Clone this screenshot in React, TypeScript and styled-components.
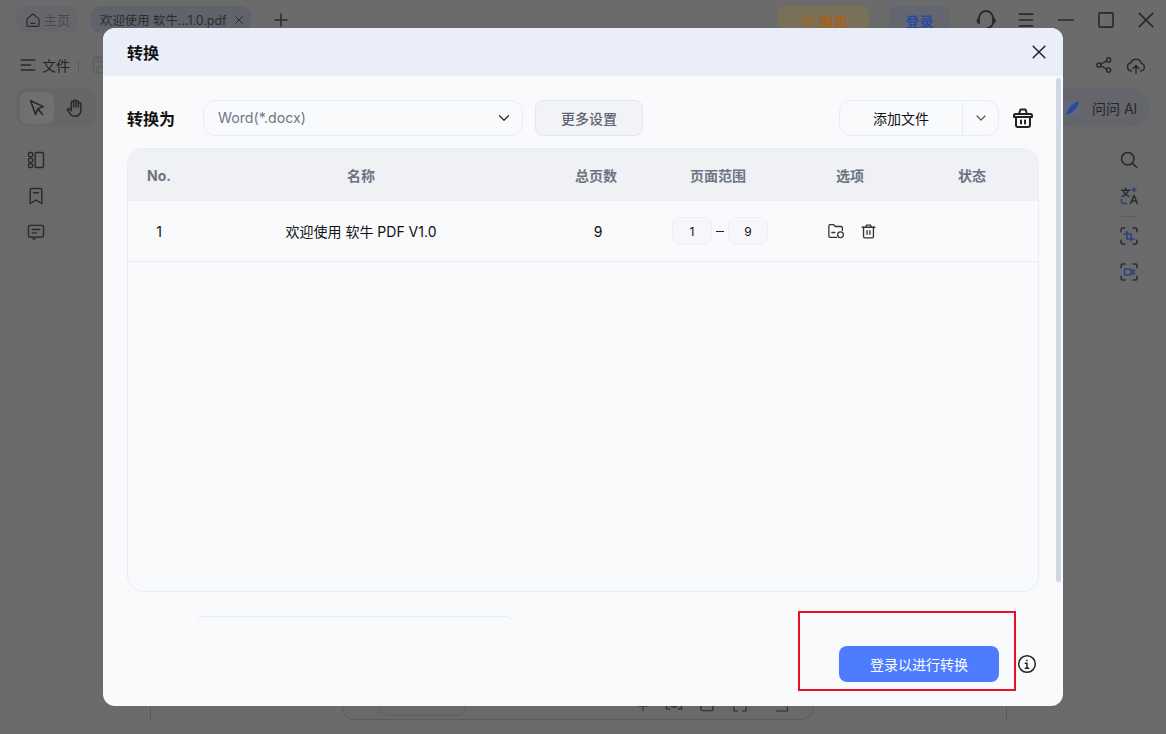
import React from "react";
import styled, { createGlobalStyle } from "styled-components";

const FONT = `Inter, "Noto Sans CJK SC", "Liberation Sans", sans-serif`;

const GlobalStyle = createGlobalStyle`
  html, body {
    margin: 0;
    padding: 0;
    height: 100%;
    overflow: hidden;
    font-family: ${FONT};
  }
  * {
    box-sizing: border-box;
  }
`;

const Page = styled.div`
  position: relative;
  width: 1166px;
  height: 734px;
  overflow: hidden;
  background: #6b6b6b;
  display: flex;
  flex-direction: column;
`;

/* ---- app behind the dialog (already dimmed colours) ---- */

const TitleBar = styled.div`
  height: 39px;
  padding: 6px 0 0 16px;
  display: flex;
  align-items: flex-start;
`;

const Tab = styled.div<{ $width: number; $tint: string; $mr: number; $size: number; $gap: number; $pl: number }>`
  width: ${(p) => p.$width}px;
  height: 27px;
  margin-right: ${(p) => p.$mr}px;
  border-radius: 9px;
  background: ${(p) => p.$tint};
  display: flex;
  align-items: center;
  padding-left: ${(p) => p.$pl}px;
  gap: ${(p) => p.$gap}px;
  font-size: ${(p) => p.$size}px;
  color: #2c2c2e;
  white-space: nowrap;
`;

const HomeText = styled.span`
  color: #4a4a4e;
`;

const PlusBox = styled.div`
  width: 20px;
  height: 27px;
  display: flex;
  align-items: center;
  justify-content: center;
`;

const Spacer = styled.div`
  flex: 1;
`;

const TopButton = styled.div<{ $width: number; $bg: string; $color: string; $mr: number }>`
  width: ${(p) => p.$width}px;
  height: 30px;
  margin-right: ${(p) => p.$mr}px;
  border-radius: 8px;
  background: ${(p) => p.$bg};
  color: ${(p) => p.$color};
  font-size: 14px;
  font-weight: 700;
  display: flex;
  align-items: center;
  justify-content: center;
  gap: 4px;
`;

const WindowIcons = styled.div`
  display: flex;
  align-items: center;
  height: 28px;
  padding-right: 8px;
  gap: 16px;
`;

const IconSlot = styled.div`
  width: 24px;
  height: 24px;
  display: flex;
  align-items: center;
  justify-content: center;
`;

const MenuRow = styled.div`
  height: 40px;
  padding: 16px 19px 0 18px;
  display: flex;
  align-items: flex-start;
  font-size: 14px;
  color: #232325;
`;

const MenuLabel = styled.span`
  margin: 1px 0 0 4px;
  line-height: 20px;
`;

const MenuDivider = styled.div`
  width: 1px;
  height: 12px;
  background: #5c5c5e;
  margin: 5px 12px 0 8px;
`;

const RightIcons = styled.div`
  display: flex;
  margin-left: auto;
  margin-top: -1px;
  gap: 10px;
`;

const ToolRow = styled.div`
  height: 52px;
  padding: 9px 16px 0;
  display: flex;
  align-items: flex-start;
  justify-content: space-between;
`;

const ToolGroup = styled.div`
  width: 80px;
  height: 39px;
  padding: 4px;
  border-radius: 12px;
  background: #656668;
  display: flex;
  gap: 4px;
`;

const ToolButton = styled.div<{ $active?: boolean }>`
  width: 34px;
  height: 32px;
  flex: none;
  border-radius: 8px;
  background: ${(p) => (p.$active ? "#6f7072" : "transparent")};
  display: flex;
  align-items: center;
  justify-content: center;
`;

const AskPill = styled.div`
  width: 100px;
  height: 39px;
  border-radius: 20px;
  background: #65666c;
  display: flex;
  align-items: center;
  padding-left: 12px;
  gap: 10px;
  font-size: 14px;
  color: #26262a;
`;

const SideRow = styled.div`
  flex: 1;
  padding: 9px 18px 0 16px;
  display: flex;
  justify-content: space-between;
  align-items: flex-start;
`;

const SidePanel = styled.div<{ $height: number }>`
  width: 39px;
  height: ${(p) => p.$height}px;
  border-radius: 12px;
  background: #696a6b;
  display: flex;
  flex-direction: column;
  align-items: center;
  padding-top: 10px;
  gap: 16px;
`;

const SideDivider = styled.div`
  width: 16px;
  height: 1px;
  background: #5d5d5f;
  margin: -6px 0 -7px;
`;

const BottomEdge = styled.div`
  position: absolute;
  left: 150px;
  bottom: 14px;
  width: 857px;
  height: 40px;
  border-left: 1px solid #5b5b5d;
  border-right: 1px solid #5b5b5d;
`;

const BottomToolbar = styled.div`
  position: absolute;
  left: 342px;
  bottom: 14px;
  width: 472px;
  height: 40px;
  border: 1px solid #5b5b5d;
  border-radius: 12px;
  background: #68696b;
  padding: 0 0 3px 37px;
  display: flex;
  align-items: flex-end;
`;

const PageBox = styled.div`
  width: 86px;
  height: 32px;
  border: 1px solid #5f5f61;
  border-radius: 9px;
`;

const BarIcon = styled.div<{ $ml: number }>`
  margin: 0 0 3px ${(p) => p.$ml}px;
  display: flex;
`;

/* ---- dialog ---- */

const Dialog = styled.div`
  position: absolute;
  left: 103px;
  top: 28px;
  width: 960px;
  height: 678px;
  border-radius: 12px;
  overflow: hidden;
  background: #f9fafc;
  display: flex;
  flex-direction: column;
`;

const DialogHeader = styled.div`
  height: 48px;
  flex: none;
  background: #e9eef9;
  padding: 0 12px 0 24px;
  display: flex;
  align-items: center;
  justify-content: space-between;
`;

const DialogTitle = styled.div`
  font-size: 16px;
  font-weight: 700;
  color: #111;
  margin-top: -1px;
`;

const CloseButton = styled.button`
  width: 24px;
  height: 24px;
  padding: 0;
  border: none;
  background: none;
  display: flex;
  align-items: center;
  justify-content: center;
`;

const DialogBody = styled.div`
  flex: 1;
  padding: 24px 24px 0;
  display: flex;
  flex-direction: column;
`;

const Scrollbar = styled.div`
  position: absolute;
  right: 2px;
  top: 50px;
  width: 5px;
  height: 504px;
  border-radius: 3px;
  background: #cfd6e4;
`;

const Controls = styled.div`
  height: 36px;
  display: flex;
  align-items: center;
`;

const ControlLabel = styled.div`
  width: 76px;
  font-size: 16px;
  font-weight: 700;
  color: #111;
`;

const Select = styled.div`
  width: 320px;
  height: 36px;
  border: 1px solid #e9ecf5;
  border-radius: 12px;
  padding: 0 9px 1px 14px;
  display: flex;
  align-items: center;
  justify-content: space-between;
  font-size: 14.2px;
  color: #6f7889;
`;

const MoreButton = styled.button`
  width: 108px;
  height: 36px;
  margin-left: 12px;
  border: 1px solid #e3e6ee;
  border-radius: 8px;
  background: #f2f3f7;
  font-family: ${FONT};
  font-size: 14px;
  font-weight: 500;
  color: #5f6673;
`;

const SplitButton = styled.div`
  width: 160px;
  height: 36px;
  margin-left: auto;
  border: 1px solid #e9ecf5;
  border-radius: 12px;
  display: flex;
  align-items: center;
  font-size: 14px;
  color: #111;
`;

const SplitLabel = styled.div`
  width: 123px;
  height: 100%;
  border-right: 1px solid #e9ecf5;
  display: flex;
  align-items: center;
  justify-content: center;
`;

const SplitCaret = styled.div`
  flex: 1;
  display: flex;
  align-items: center;
  justify-content: center;
`;

const TrashSlot = styled.div`
  width: 40px;
  display: flex;
  justify-content: flex-end;
  padding-right: 4px;
`;

const TableBox = styled.div`
  height: 444px;
  margin-top: 12px;
  border: 1px solid #e9ecf5;
  border-radius: 16px;
  overflow: hidden;
`;

const COLUMNS = "62px 342px 128px 116px 148px 96px";

const HeadRow = styled.div`
  height: 52px;
  background: #f0f1f5;
  display: grid;
  grid-template-columns: ${COLUMNS};
  align-items: center;
  text-align: center;
  font-size: 14px;
  font-weight: 700;
  color: #6c7482;
`;

const BodyRow = styled.div`
  height: 61px;
  border-bottom: 1px solid #ebedf1;
  display: grid;
  grid-template-columns: ${COLUMNS};
  align-items: center;
  text-align: center;
  font-size: 14px;
  color: #111;
`;

const PageCount = styled.span`
  padding-left: 4px;
`;

const RangeCell = styled.div`
  display: flex;
  align-items: center;
  justify-content: center;
  padding-left: 4px;
  gap: 4px;
`;

const RangeInput = styled.div`
  width: 40px;
  height: 28px;
  border: 1px solid #eef0f5;
  border-radius: 8px;
  background: #f5f7fb;
  font-size: 12px;
  display: flex;
  align-items: center;
  justify-content: center;
`;

const RangeDash = styled.div`
  width: 8px;
  height: 1px;
  background: #222;
`;

const OptionCell = styled.div`
  display: flex;
  align-items: center;
  justify-content: center;
  padding-left: 3px;
  gap: 15px;
`;

const Footer = styled.div`
  flex: 1;
  display: flex;
  padding: 0 2px 0 69px;
`;

const OutputBox = styled.div`
  width: 317px;
  height: 7px;
  margin-top: 24px;
  border: 1px solid #e9ecf5;
  border-bottom: none;
  border-radius: 10px 10px 0 0;
  -webkit-mask-image: linear-gradient(#000 30%, transparent);
  mask-image: linear-gradient(#000 30%, transparent);
`;

const FooterAction = styled.div`
  margin: 54px 0 0 auto;
  height: 36px;
  display: flex;
  align-items: center;
  gap: 18px;
`;

const ConvertButton = styled.button`
  width: 160px;
  height: 36px;
  border: none;
  border-radius: 8px;
  background: #4d7cfe;
  color: #fff;
  font-family: ${FONT};
  font-size: 14px;
`;

const Callout = styled.div`
  position: absolute;
  left: 798px;
  top: 611px;
  width: 218px;
  height: 80px;
  border: 2px solid #e81123;
  pointer-events: none;
`;

/* ---- icons ---- */

const Line = ({ size = 20, color = "#2a2a2c", width = 1.6, children }: { size?: number; color?: string; width?: number; children: React.ReactNode }) => (
  <svg width={size} height={size} viewBox="0 0 24 24" fill="none" stroke={color} strokeWidth={width} strokeLinecap="round" strokeLinejoin="round">
    {children}
  </svg>
);

const DARK = "#2a2a2c";
const NAVY = "#2b3f7e";

export default function App(): React.ReactElement {
  return (
    <Page>
      <GlobalStyle />
      <TitleBar>
        <Tab $width={62} $tint="#66676b" $mr={13} $size={13} $gap={2} $pl={8}>
          <Line size={18} color={DARK}>
            <path d="M4 10.5 12 4l8 6.5V19a1.5 1.5 0 0 1-1.5 1.5h-13A1.5 1.5 0 0 1 4 19z" />
            <path d="M9 16.5h6" />
          </Line>
          <HomeText>主页</HomeText>
        </Tab>
        <Tab $width={160} $tint="#61636b" $mr={20} $size={12.4} $gap={5} $pl={9}>
          <span>欢迎使用 软牛...1.0.pdf</span>
          <Line size={14} color={DARK}>
            <path d="M6 6l12 12M18 6 6 18" />
          </Line>
        </Tab>
        <PlusBox>
          <Line size={18} color={DARK} width={2}>
            <path d="M12 4v16M4 12h16" />
          </Line>
        </PlusBox>
        <Spacer />
        <TopButton $width={91} $bg="#787058" $color="#a8601a" $mr={20}>
          <Line size={16} color="#a8601a">
            <path d="M7 5h10l4 5-9 10-9-10z" />
            <path d="M9 10.5l3 3 3-3" />
          </Line>
          购买
        </TopButton>
        <TopButton $width={61} $bg="#63666f" $color="#2b4a9e" $mr={24}>
          登录
        </TopButton>
        <WindowIcons>
          <IconSlot>
            <Line size={24} color={DARK} width={1.9}>
              <path d="M5 15V10a7 7 0 0 1 14 0v5" />
              <path d="M19 10.5c1.4.4 2 1.2 2 2.2s-.6 1.8-2 2.2" />
              <path d="M5 10.5c-1 .4-1.5 1.2-1.5 2.2S4 14.5 5 15" />
              <path d="M19 15c-.6 3-2.6 4.6-5.5 5" />
            </Line>
          </IconSlot>
          <IconSlot>
            <Line size={20} color={DARK} width={2}>
              <path d="M4 5h16M4 12h16M4 19h16" />
            </Line>
          </IconSlot>
          <IconSlot>
            <Line size={20} color={DARK} width={2}>
              <path d="M3 12h18" />
            </Line>
          </IconSlot>
          <IconSlot>
            <Line size={20} color={DARK} width={2}>
              <rect x="3.5" y="3.5" width="17" height="17" rx="1.5" />
            </Line>
          </IconSlot>
          <IconSlot>
            <Line size={20} color={DARK} width={2}>
              <path d="M4 4l16 16M20 4 4 20" />
            </Line>
          </IconSlot>
        </WindowIcons>
      </TitleBar>

      <MenuRow>
        <Line size={20} color={DARK} width={2}>
          <path d="M4 6h16M4 12h11M4 18h16" />
        </Line>
        <MenuLabel>文件</MenuLabel>
        <MenuDivider />
        <Line size={20} color="#5f5f61" width={1.8}>
          <path d="M3 5a2 2 0 0 1 2-2h14a2 2 0 0 1 2 2v14a2 2 0 0 1-2 2H5a2 2 0 0 1-2-2z" />
          <path d="M8 3v5h8V3M7 21v-7h10v7" />
        </Line>
        <RightIcons>
          <Line size={22} color={DARK}>
            <circle cx="6.5" cy="12" r="2.3" />
            <circle cx="17" cy="6.5" r="2.3" />
            <circle cx="17" cy="17.5" r="2.3" />
            <path d="M8.6 11l6.3-3.4M8.6 13l6.3 3.4" />
          </Line>
          <Line size={22} color={DARK}>
            <path d="M7 18.5a4.5 4.5 0 0 1-.6-8.9 6 6 0 0 1 11.4.6 4.2 4.2 0 0 1-.8 8.3" />
            <path d="M12 21v-8M8.8 15.8 12 12.6l3.2 3.2" />
          </Line>
        </RightIcons>
      </MenuRow>

      <ToolRow>
        <ToolGroup>
          <ToolButton $active>
            <Line size={22} color={DARK} width={1.8}>
              <path d="M5 4l14 6.500-6 2-2.500 6.500z" />
              <path d="M13.500 13.500 18 19" />
            </Line>
          </ToolButton>
          <ToolButton>
            <Line size={22} color={DARK} width={1.7}>
              <path d="M8 13V6a1.300 1.300 0 0 1 2.600 0v5V4.500a1.300 1.300 0 0 1 2.600 0V11 5.500a1.300 1.300 0 0 1 2.600 0V11 7.500a1.300 1.300 0 0 1 2.600 0V15a6 6 0 0 1-6 6h-1.200c-2 0-3.400-1-4.500-2.600L4 14.500c-.8-1.300 1-2.600 2-1.600L8 15" />
            </Line>
          </ToolButton>
        </ToolGroup>
        <AskPill>
          <svg width="20" height="20" viewBox="0 0 20 20">
            <path d="M1 1c4 2 9 2 18 2-2 5-2 10-1 16-5-1-11-1-16 0 1-6 1-12-1-18z" fill="#5b6a8c" opacity="0.55" />
            <path d="M4 17C6 10 10 5 17 3c-1 6-5 12-13 14z" fill="#2b4a9a" />
          </svg>
          问问 AI
        </AskPill>
      </ToolRow>

      <SideRow>
        <SidePanel $height={112}>
          <Line size={20} color={DARK} width={1.7}>
            <rect x="3" y="3" width="5" height="5" rx="1.5" />
            <rect x="3" y="10" width="5" height="4.500" rx="1.5" />
            <rect x="3" y="16.500" width="5" height="4.500" rx="1.5" />
            <rect x="11" y="3" width="10" height="18" rx="1.5" />
          </Line>
          <Line size={20} color={DARK} width={1.7}>
            <path d="M5 5a2 2 0 0 1 2-2h10a2 2 0 0 1 2 2v16l-7-4-7 4z" />
            <path d="M9 8h6" />
          </Line>
          <Line size={20} color={DARK} width={1.7}>
            <path d="M3 5.500A1.500 1.500 0 0 1 4.500 4h15A1.500 1.500 0 0 1 21 5.500v11a1.500 1.500 0 0 1-1.500 1.500H12l-3 3v-3H4.500A1.500 1.500 0 0 1 3 16.500z" />
            <path d="M7.500 9h9M7.500 13h5" />
          </Line>
        </SidePanel>
        <SidePanel $height={152}>
          <Line size={20} color={DARK} width={1.9}>
            <circle cx="10.500" cy="10.500" r="7.500" />
            <path d="M16 16l5.500 5" />
          </Line>
          <Line size={20} color={DARK} width={1.7}>
            <path d="M3 5h10M8 2.500V5M5 5c.5 3 3 6 7 7.500M11 5c-.5 3-3 6-7 7.500" />
            <path d="M14 21l4-10 4 10M15.500 18h5" />
            <path d="M18 2v5M15.500 4.500h5" stroke={NAVY} />
            <path d="M3 16v3a2 2 0 0 0 2 2h4" stroke={NAVY} />
          </Line>
          <SideDivider />
          <Line size={20} color={DARK} width={1.8}>
            <path d="M2.500 7V4a1.500 1.500 0 0 1 1.500-1.500h3M17 2.500h3A1.500 1.500 0 0 1 21.500 4v3M21.500 17v3a1.500 1.500 0 0 1-1.500 1.500h-3M7 21.500H4A1.500 1.500 0 0 1 2.500 20v-3" />
            <path d="M9.500 6.500v9h9M6 9.500h8.500v8.500" stroke={NAVY} />
          </Line>
          <Line size={20} color={DARK} width={1.8}>
            <path d="M2.500 7V4a1.500 1.500 0 0 1 1.500-1.500h3M17 2.500h3A1.500 1.500 0 0 1 21.500 4v3M21.500 17v3a1.500 1.500 0 0 1-1.500 1.500h-3M7 21.500H4A1.500 1.500 0 0 1 2.500 20v-3" />
            <rect x="6.500" y="8.500" width="8" height="7" rx="1.500" stroke={NAVY} />
            <path d="M14.500 11l3.500-1.500v5L14.500 13" stroke={NAVY} />
          </Line>
        </SidePanel>
      </SideRow>

      <BottomEdge />
      <BottomToolbar>
        <PageBox />
        <BarIcon $ml={170}>
          <Line size={14} color={DARK}>
            <path d="M12 4v16M4 12h16" />
          </Line>
        </BarIcon>
        <BarIcon $ml={14}>
          <Line size={20} color={DARK}>
            <path d="M3 14v5h4M21 14v5h-4" />
            <circle cx="12" cy="13" r="4" />
          </Line>
        </BarIcon>
        <BarIcon $ml={14}>
          <Line size={18} color={DARK}>
            <rect x="4" y="6" width="16" height="15" rx="2" />
          </Line>
        </BarIcon>
        <BarIcon $ml={16}>
          <Line size={16} color={DARK}>
            <path d="M3 15v6h5M21 15v6h-5" />
          </Line>
        </BarIcon>
        <BarIcon $ml={26}>
          <Line size={16} color={DARK}>
            <path d="M4 21h16v-6" />
          </Line>
        </BarIcon>
      </BottomToolbar>

      <Dialog>
        <DialogHeader>
          <DialogTitle>转换</DialogTitle>
          <CloseButton aria-label="关闭">
            <Line size={20} color="#222" width={1.8}>
              <path d="M5 5l14 14M19 5 5 19" />
            </Line>
          </CloseButton>
        </DialogHeader>
        <Scrollbar />
        <DialogBody>
          <Controls>
            <ControlLabel>转换为</ControlLabel>
            <Select>
              Word(*.docx)
              <Line size={18} color="#333" width={1.8}>
                <path d="M6 9l6 6 6-6" />
              </Line>
            </Select>
            <MoreButton>更多设置</MoreButton>
            <SplitButton>
              <SplitLabel>添加文件</SplitLabel>
              <SplitCaret>
                <Line size={16} color="#555" width={1.8}>
                  <path d="M6 9l6 6 6-6" />
                </Line>
              </SplitCaret>
            </SplitButton>
            <TrashSlot>
              <Line size={24} color="#222" width={2}>
                <path d="M3 9.500c0-.8.5-1.500 1.500-1.500h15c1 0 1.500.7 1.500 1.500v1.500H3z" />
                <path d="M8 8l1.500-4.500h5L16 8" />
                <path d="M5 11v8a2 2 0 0 0 2 2h10a2 2 0 0 0 2-2v-8" />
                <path d="M10 14.500v3M14 14.500v3" />
              </Line>
            </TrashSlot>
          </Controls>

          <TableBox>
            <HeadRow>
              <span>No.</span>
              <span>名称</span>
              <span>总页数</span>
              <span>页面范围</span>
              <span>选项</span>
              <span>状态</span>
            </HeadRow>
            <BodyRow>
              <span>1</span>
              <span>欢迎使用 软牛 PDF V1.0</span>
              <PageCount>9</PageCount>
              <RangeCell>
                <RangeInput>1</RangeInput>
                <RangeDash />
                <RangeInput>9</RangeInput>
              </RangeCell>
              <OptionCell>
                <Line size={18} color="#333" width={1.7}>
                  <path d="M20.500 11V7.500A1.500 1.500 0 0 0 19 6H11L9 3.500H4A1.500 1.500 0 0 0 2.500 5v14A1.500 1.500 0 0 0 4 20.500h9" />
                  <path d="M6.500 14h4" />
                  <circle cx="18" cy="17" r="3.800" />
                </Line>
                <Line size={17} color="#333" width={1.9}>
                  <path d="M3 6h18M8 6l1-3h6l1 3" />
                  <path d="M5 6v13a2 2 0 0 0 2 2h10a2 2 0 0 0 2-2V6" />
                  <path d="M10 11v5M14 11v5" />
                </Line>
              </OptionCell>
              <span />
            </BodyRow>
          </TableBox>

          <Footer>
            <OutputBox />
            <FooterAction>
              <ConvertButton>登录以进行转换</ConvertButton>
              <Line size={20} color="#222" width={1.8}>
                <circle cx="12" cy="12" r="10" />
                <path d="M10 11h2v6M10 17h4M12 7.500v.5" />
              </Line>
            </FooterAction>
          </Footer>
        </DialogBody>
      </Dialog>

      <Callout />
    </Page>
  );
}
